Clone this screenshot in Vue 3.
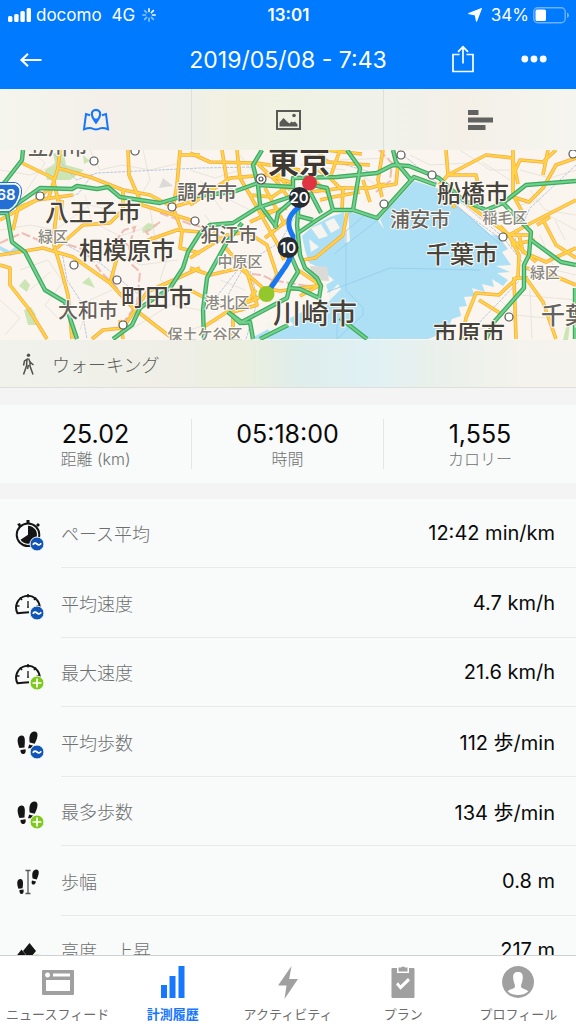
<template>
    <div class="screen">
        <header class="header">
            <div class="status-bar">
                <div class="status-left">
                    <svg class="signal" width="24" height="16" viewBox="0 0 24 16" fill="#fff">
                        <rect x="0" y="9" width="4.4" height="6" rx="1.5" />
                        <rect x="6.2" y="7" width="4.4" height="8" rx="1.5" />
                        <rect x="12.4" y="4" width="4.4" height="11" rx="1.5" />
                        <rect x="18.6" y="1" width="4.4" height="14" rx="1.5" />
                    </svg>
                    <span>docomo</span>
                    <span class="network">4G</span>
                    <svg width="16" height="16" viewBox="-8 -8 16 16" stroke="#fff" stroke-width="1.6" stroke-linecap="round">
                        <line
                            v-for="n in 8"
                            :key="n"
                            x1="0"
                            y1="-3.4"
                            x2="0"
                            y2="-6.2"
                            :transform="`rotate(${n * 45})`"
                            :opacity="n < 3 || n === 8 ? 1 : 0.55"
                        />
                    </svg>
                </div>
                <span class="clock">13:01</span>
                <div class="status-right">
                    <svg width="14" height="14" viewBox="0 0 14 14"><path d="M13.5.5 8.5 13.5 7.3 7 .5 5.6z" fill="#fff" stroke="#fff" stroke-linejoin="round" /></svg>
                    <span>34%</span>
                    <svg width="36" height="17" viewBox="0 0 36 17">
                        <rect x=".8" y=".8" width="31.4" height="15" rx="4" fill="none" stroke="#6db2ff" stroke-width="1.4" />
                        <rect x="2.5" y="2.6" width="10.5" height="11.4" rx="1.5" fill="#fff" />
                        <path d="M34 5.5q2 .5 2 2.8t-2 2.8z" fill="#6db2ff" />
                    </svg>
                </div>
            </div>
            <div class="title-bar">
                <button class="icon-button back" aria-label="戻る">
                    <svg width="24" height="16" viewBox="0 0 24 16" fill="none" stroke="#fff" stroke-width="2.2"><path d="M22.500 8H2.500M9 1.700 2.500 8l6.500 6.300" /></svg>
                </button>
                <h1>2019/05/08 - 7:43</h1>
                <div class="actions">
                    <button class="icon-button" aria-label="共有">
                        <svg width="24" height="30" viewBox="0 0 24 30" fill="none" stroke="#fff" stroke-width="1.7"><path d="M8.500 9.500H2v17h20v-17h-6.500M12 18.500V2M7 6.800l5-5 5 5" /></svg>
                    </button>
                    <button class="icon-button" aria-label="メニュー">
                        <svg width="26" height="10" viewBox="0 0 26 10" fill="#fff"><circle cx="3.800" cy="4" r="3.400" /><circle cx="13" cy="4" r="3.400" /><circle cx="22.200" cy="4" r="3.400" /></svg>
                    </button>
                </div>
            </div>
        </header>

        <div class="view-tabs">
            <button aria-label="地図">
                <svg width="28" height="24" viewBox="0 0 28 24" fill="none" stroke="#1877f9" stroke-width="2">
                    <path d="M8 7.200 4 6 2 21.200q6-2 8-.8 4 2 8 0 3-1 8 .8L24 6l-4 1.200" />
                    <path d="M14 14.500Q9.800 9 9.800 6a4.200 4.200 0 0 1 8.400 0q0 3-4.200 8.500z" stroke-width="2.200" />
                    <path d="M12 10.500h4L14 14z" fill="#1877f9" stroke="none" />
                </svg>
            </button>
            <button aria-label="写真">
                <svg width="26" height="22" viewBox="0 0 26 22" fill="#595a55">
                    <path d="M2 2h23v18H2z" fill="none" stroke="#595a55" stroke-width="2" />
                    <path d="M4.500 17.500v-4l4-4.500 4 4 2 1.500 2-2 1.500 1 2-1 2.500 3v2z" />
                    <circle cx="19" cy="6.500" r="1.800" />
                </svg>
            </button>
            <button aria-label="グラフ">
                <svg width="26" height="20" viewBox="0 0 26 20" fill="#626360"><path d="M1 0h10.500v5H1zM1 7.500h25v5H1zM1 15h17.500v5H1z" /></svg>
            </button>
        </div>

        <svg class="map" viewBox="0 150 576 190" preserveAspectRatio="xMidYMid slice">
            <rect y="150" width="576" height="190" fill="#faf5ee" />
            <path v-for="d in parks" :key="d" :d="d" fill="#cbe5b4" />
            <path d="M302 236 313 226 330 217 348 211 353 213 377 219 384 229 380 219 390 207 404 192 414 181 437 188 459 208 478 224 491 235 497 240 491 234 498 236 508 249 502 252 511 265 496 266 510 272 497 273 508 280 503 286 492 279 494 287 482 284 485 292 472 288 475 296 464 297 467 306 459 307 461 316 452 319 446 332 428 339H250L270 328 292 317 306 310 323 309 331 299 326 285 334 280 318 267 309 263 305 250z" fill="#ade0f5" />
            <path d="M0 246 10 251 18 244 22 252 10 256 0 250z" fill="#ade0f5" />
            <g fill="#f6f4ef">
                <path d="M311 228 321 224 328 236 319 239zM325 222 334 218 340 228 331 233zM309 239 319 247 311 252zM329 293 338 284 341 289 331 299zM348 208 350 242 345 243 344 212z" />
                <path d="M263 323 287 318 294 325 270 332z" />
            </g>
            <path d="M310 266 327 267 329 281 313 280zM163 178 173 186 159 188z" fill="#dcdad7" />
            <g class="streets">
                <path v-for="d in streets" :key="d" :d="d" />
            </g>
            <g class="ferries">
                <path d="M337 339 363 315V308L346 290V231L365 215M327 292 390 268 480 270M337 312V339M379 219 334 254M443 193 500 244" />
            </g>
            <g class="borders">
                <path d="M0 243 22 233 38 240 60 242 85 250 101 272 120 291M160 222 146 232 152 238 140 247 131 240 135 227 124 230 118 238 129 246 130 263 140 272 137 304 123 323M160 213 190 224 202 227M252 274 262 275 272 280 320 288M379 150 392 163 390 181 376 192" />
            </g>
            <g class="rails">
                <path d="M55 155 76 180 97 173 200 168 255 167M93 174 78 194 61 198 53 225 57 240 100 263 145 300M62 252 67 280 80 300 87 339M202 315 240 267 280 242 296 215M228 295 245 265M300 152 370 172M398 151 430 177 503 237 526 267M576 165 530 208 515 240M477 325 519 281M250 271 258 300 246 339M440 195 500 238" />
            </g>
            <g class="roads">
                <path v-for="d in roads" :key="d" :d="d" class="road-case" />
                <path v-for="d in roads" :key="d" :d="d" class="road-fill" />
            </g>
            <g class="highways">
                <path v-for="d in highways" :key="d" :d="d" class="highway-case" />
                <path v-for="d in highways" :key="d" :d="d" class="highway-fill" />
            </g>
            <circle v-for="c in stations" :key="c.join()" :cx="c[0]" :cy="c[1]" r="4" class="station" />
            <circle cx="261" cy="179" r="5" class="station" />
            <circle cx="261" cy="179" r="2" class="station" />
            <path d="M-6 184H15q6 2 5 9-2 12-11 17H-6z" fill="#236fd4" stroke="#fff" stroke-width="1.500" />
            <path d="M-6 182.500H15.500q7 2.500 6 10.500-2 13-12 19H-6" fill="none" stroke="#236fd4" />
            <text x="6" y="200" class="shield">68</text>
            <text
                v-for="label in labels"
                :key="label.x"
                :x="label.x"
                :y="label.y"
                :font-size="label.size"
                :class="['place', label.kind]"
            >{{ label.text }}</text>
            <path d="M299 207Q290 214 289 221T293 236V247Q291 260 283 270L268 292" class="route" />
            <circle cx="309.500" cy="183" r="7.500" fill="#de3540" />
            <circle cx="266.500" cy="294" r="8" fill="#92c82b" />
            <circle cx="299.500" cy="197.500" r="10.500" fill="#272c33" />
            <circle cx="288" cy="247.500" r="10.500" fill="#272c33" />
            <text x="299" y="203" class="marker">20</text>
            <text x="288" y="253" class="marker">10</text>
        </svg>

        <div class="activity">
            <svg width="14" height="24" viewBox="0 0 14 24" fill="none" stroke="#50524d" stroke-width="1.500">
                <circle cx="7.500" cy="3.200" r="1.700" fill="#50524d" stroke="none" />
                <path d="M7 6.500 3.500 9 2.500 13.500M7.500 6.500 9 10l3.500 3M6 7.500 5.500 14 2.500 22.500M9 9v5l3 8.500M7.500 13l-1 4" />
            </svg>
            <span>ウォーキング</span>
        </div>

        <div class="summary">
            <div v-for="item in summary" :key="item.label" class="summary-item">
                <strong>{{ item.value }}</strong>
                <span>{{ item.label }}</span>
            </div>
        </div>

        <ul class="details">
            <li v-for="row in rows" :key="row.label">
                <svg width="32" height="36" viewBox="0 0 32 36" fill="#151515" stroke="#151515">
                    <g v-if="row.icon === 'pace'" stroke="none">
                        <circle cx="14" cy="18.700" r="11.300" fill="none" stroke="#151515" stroke-width="2" />
                        <path d="M14 18.700V9.700A9 9 0 1 1 6.500 23.700z" />
                        <path d="M12.500 4h3v4h-3zM3.200 8 6 7l1.500 3.500-2 1.500zM22 9l2-2 2 2-2 2z" />
                    </g>
                    <g v-else-if="row.icon === 'speed'" fill="none" stroke-width="2">
                        <path d="M15 27.200Q8 27.500 3.500 28.200A11.800 11.800 0 1 1 25.700 23" />
                        <path d="M14 9v3.500M2 21h3.500M6 12.500l2 2.500M22 12.500l-2 2.500M22.500 21H26" stroke-width="1.500" />
                        <path d="M14 16v5" stroke-width="1.300" />
                        <circle cx="14" cy="22" r="1" fill="#151515" stroke="none" />
                    </g>
                    <g v-else-if="row.icon === 'steps'" stroke="none">
                        <path d="M7 11.500c-5 1-3.500 8-1.500 12.500l5-.5c.4-6 1.500-12.500-3.500-12zM6.500 26l5-.7c.8 3.500-.8 4.700-2.500 4.700S6.200 28 6.500 26zM20 7.500c-5 1-5 7-4.300 11l5 1.200c2.700-5 5-12.500-.7-12.200zM15.200 20.500l4 1.300c-1 3-2.500 2.500-5.200 2.500z" />
                    </g>
                    <g v-else-if="row.icon === 'stride'" stroke="none">
                        <path d="M6 16c-3.800.8-3 6-1.500 9.700l4-.4C9.500 20.500 9.500 15.500 6 16zM5.500 27l4-.5c.6 3-.5 4.500-2 4.500s-2.300-2-2-4zM22 6.500c-4.300.8-4 5.500-3.300 9l4 1C24.700 12.500 26.500 6.500 22 6.500zM18 17.500l4 1c-.7 3-2.200 3.300-3.300 3s-1.500-2-.7-4z" />
                        <path d="M14 7v24M11.500 7.500h5M11.500 30.500h5" fill="none" stroke="#555" stroke-width="1.300" />
                    </g>
                    <g v-else stroke="none">
                        <path d="M15.500 10 22 18l-6.500 8L9 18zM7.500 16.500 15 26H0z" />
                    </g>
                    <circle v-if="row.badge" cx="23" cy="28" r="7" :fill="row.badge === 'average' ? '#1055b5' : '#7fc81e'" stroke="#f9fbfb" />
                    <path v-if="row.badge === 'average'" d="M18.800 28.800q2-2.800 4.200-.8t4.200-.8" fill="none" stroke="#fff" stroke-width="1.700" />
                    <path v-if="row.badge === 'max'" d="M18.500 28h9M23 23.500v9" fill="none" stroke="#fff" stroke-width="1.700" />
                </svg>
                <div class="detail">
                    <span class="detail-label">{{ row.label }}</span>
                    <span class="detail-value">{{ row.value }}</span>
                </div>
            </li>
        </ul>

        <nav class="tab-bar">
            <a v-for="tab in tabs" :key="tab.name" href="#" :class="{ active: tab.name === current }" @click.prevent="current = tab.name">
                <svg width="34" height="34" viewBox="0 0 34 34" fill="currentColor">
                    <path v-if="tab.icon === 'feed'" fill-rule="evenodd" d="M2 4h30q1 0 1 1v23q0 1-1 1H2q-1 0-1-1V5q0-1 1-1zM5 14v11h24V14zM12 7.500v3h17v-3zM6.500 6.500a2.500 2.500 0 1 0 .1 0z" />
                    <path v-else-if="tab.icon === 'history'" d="M5 19h6v13H5zM13.500 10h6v22h-6zM22.500 0h6v32h-6z" />
                    <path v-else-if="tab.icon === 'activity'" d="M20.500 0 7 19.500h8.500L13.500 33 27 13h-8.800z" />
                    <template v-else-if="tab.icon === 'plan'">
                        <path fill-rule="evenodd" d="M6.500 2H11v5h12V2h4.500q1 0 1 1v28q0 1-1 1h-21q-1 0-1-1V3q0-1 1-1zM10 18.500l4.500 5.200L24 14.500l-2-2.500-7.500 7.200-2.500-3z" />
                        <path d="M12.500 1.500h2.500q2-2 4 0h2.500v4h-9z" />
                    </template>
                    <path v-else fill-rule="evenodd" d="M17 0a16 16 0 1 0 .1 0zM17 6c-4 0-5.200 2.500-4.700 7 .3 3.500 1.700 5 1.700 7.500 0 2.500-6 2.500-7.300 5Q11 29 17 29t10.300-3.500c-1.300-2.500-7.300-2.500-7.300-5s1.400-4 1.700-7.500C22.200 8.500 21 6 17 6z" />
                </svg>
                <span>{{ tab.name }}</span>
            </a>
        </nav>
    </div>
</template>

<script setup>
import { ref } from 'vue';

const current = ref('計測履歴')

const tabs = [
    {name : 'ニュースフィード', icon : 'feed'},
    {name : '計測履歴', icon : 'history'},
    {name : 'アクティビティ', icon : 'activity'},
    {name : 'プラン', icon : 'plan'},
    {name : 'プロフィール', icon : 'profile'},
]

const summary = [
    {value : '25.02', label : '距離 (km)'},
    {value : '05:18:00', label : '時間'},
    {value : '1,555', label : 'カロリー'},
]

const rows = [
    {label : 'ペース平均', value : '12:42 min/km', icon : 'pace', badge : 'average'},
    {label : '平均速度', value : '4.7 km/h', icon : 'speed', badge : 'average'},
    {label : '最大速度', value : '21.6 km/h', icon : 'speed', badge : 'max'},
    {label : '平均歩数', value : '112 歩/min', icon : 'steps', badge : 'average'},
    {label : '最多歩数', value : '134 歩/min', icon : 'steps', badge : 'max'},
    {label : '歩幅', value : '0.8 m', icon : 'stride'},
    {label : '高度　上昇', value : '217 m', icon : 'altitude', badge : 'max'},
]

// 地図
const labels = [
    {text : '立川市', x : 58, y : 155, size : 20, kind : 'town'},
    {text : '八王子市', x : 93, y : 221, size : 24, kind : 'city'},
    {text : '緑区', x : 53, y : 242, size : 15, kind : 'ward'},
    {text : '相模原市', x : 127, y : 259, size : 24, kind : 'city'},
    {text : '町田市', x : 157, y : 306, size : 24, kind : 'city'},
    {text : '大和市', x : 88, y : 318, size : 20, kind : 'town'},
    {text : '調布市', x : 207, y : 200, size : 20, kind : 'town'},
    {text : '狛江市', x : 229, y : 242, size : 19, kind : 'town'},
    {text : '中原区', x : 240, y : 267, size : 15, kind : 'ward'},
    {text : '港北区', x : 227, y : 308, size : 15, kind : 'ward'},
    {text : '保土ケ谷区', x : 205, y : 340, size : 15, kind : 'ward'},
    {text : '東京', x : 299, y : 173, size : 31, kind : 'capital'},
    {text : '川崎市', x : 315, y : 324, size : 28, kind : 'city'},
    {text : '船橋市', x : 473, y : 202, size : 24, kind : 'city'},
    {text : '浦安市', x : 420, y : 227, size : 20, kind : 'town'},
    {text : '稲毛区', x : 505, y : 223, size : 15, kind : 'ward'},
    {text : '千葉市', x : 462, y : 263, size : 24, kind : 'city'},
    {text : '緑区', x : 545, y : 278, size : 15, kind : 'ward'},
    {text : '千葉', x : 565, y : 324, size : 24, kind : 'town'},
    {text : '市原市', x : 469, y : 342, size : 24, kind : 'city'},
]

const stations = [
    [94, 161], [40, 196], [172, 207], [74, 265], [117, 280], [123, 325], [195, 221],
    [135, 151], [384, 204], [401, 155], [432, 175], [503, 237], [509, 317], [573, 154],
]

const parks = [
    'M45 170 55 163 53 153 64 154 66 165 84 170 70 180 47 180z',
    'M142 228 148 223 158 225 150 231 143 233z',
    'M82 283 89 277 95 288z',
    'M19 286 25 279 30 285 27 292z',
    'M24 310 31 307 36 315 34 322 39 325 28 325z',
    'M290 156 296 157 293 162zM228 189 233 187 232 193z',
    'M566 327 570 325 568 340 563 340z',
    'M83 155 90 161 84 164z',
]

const highways = [
    'M23 150 22 160 5 182 0 187',
    'M0 213H7L12 242 25 252 45 290 65 302 68 312 77 339',
    'M7 211 40 188 72 189 77 186 97 189 108 187 120 197 160 203 177 198 233 192 258 183',
    'M113 339 132 325 140 308 170 288 183 268 188 252 200 233 210 225 233 223 257 208 290 197',
    'M262 150 253 165 258 185 260 205 277 228',
    'M258 185 293 187V178L337 177 377 173 393 165 409 166 439 178 463 200 486 210 503 203 526 185 576 181',
    'M393 150 396 162 411 180',
    'M298 233 317 220 333 210H353L377 218 414 177 436 185',
    'M347 150 360 168 353 210',
    'M313 185 327 188 333 210',
    'M299 200 297 225 300 255 305 268 317 278 321 286 319 298 300 289 289 288',
    'M293 200 278 213 275 228M310 192 321 213M298 216 313 220',
    'M290 240 292 258 298 272 290 285 287 298 240 323 228 312',
    'M242 223 227 242 207 278 203 310 204 339',
    'M228 312 243 323 250 322 253 339M260 339 288 325M340 318 367 339',
    'M503 203 531 232 529 255 524 265V288L494 322 486 339',
    'M531 240 561 262 576 265M575 288V339',
]

const roads = [
    'M22 163 53 178 58 200 53 242 60 265 68 295 72 339',
    'M60 150 58 168 90 177 123 190 150 195 173 207 197 200',
    'M58 168 48 200M0 220 37 200 73 195M13 230 18 208 37 200',
    'M0 255 43 248 73 257 110 283 133 308 173 339',
    'M57 248 83 225 110 223 123 210V190',
    'M128 150 129 175 142 205 197 222M62 200 61 220M36 200 50 188',
    'M180 150 177 185 173 207 182 232 180 248 200 253M180 155H200',
    'M143 242 177 230 200 232M110 283 117 258M120 320 123 339',
    'M0 265 10 268V285L28 308 47 339',
    'M92 339 103 330 123 328 147 292 200 268',
    'M222 150 227 182 210 190M190 153 210 162 257 163 300 170',
    'M237 150 240 178 250 195 278 245 284 260',
    'M273 150 278 175 290 190M190 205 230 178 267 175 293 183',
    'M190 258 227 235 247 232 267 245 277 275 267 292',
    'M190 268 210 275 240 268 263 288 280 291 323 285',
    'M223 245 247 272 257 305 233 312V339M190 290 220 306',
    'M202 328 230 310 262 296M213 232 227 245M256 290 240 311',
    'M257 163 278 183 288 197M262 213 287 208M265 188 285 225',
    'M250 195 272 197 293 183M265 238 290 218M250 222 278 209',
    'M340 150 330 178 340 188 370 188 385 184',
    'M317 150 327 162 370 165M330 178 318 170M325 150 362 154',
    'M310 192 343 188 342 210M312 178 330 195M320 200 333 197 360 192',
    'M303 260 315 258 343 235 347 213M295 268 320 285 300 296',
    'M383 150 378 180 382 197M363 180 370 202M378 187 396 184 398 165',
    'M446 150 448 175 476 175 479 188M448 175 440 184 455 208',
    'M448 175 486 155 513 158V195L524 215M513 150V158',
    'M513 175 520 160 543 162 556 150M513 160 518 184',
    'M513 197 529 202 543 188 556 165 576 158M548 150 543 175',
    'M576 200 533 222 509 235 486 218 466 203',
    'M509 235 519 255 518 277 499 295 476 293 466 318 462 339',
    'M519 235 523 252 546 262 576 248M509 235 532 235M511 245 535 240',
    'M543 220 556 245 576 258M537 225 550 217',
    'M526 268 547 273 576 285M526 278 543 302 556 339',
    'M514 277 516 339M479 300 503 315M515 278 528 278',
    'M500 226 520 248 536 262',
]

const streets = [
    'M0 170 30 175 55 165M30 150 45 163 20 200M90 150 100 170 122 165 150 170 180 163',
    'M0 230 30 225 55 230 90 205 130 215M20 270 48 260 63 282 45 305 60 320',
    'M85 195 92 222 120 236 145 228M80 260 105 245 140 265 178 260',
    'M0 300 20 318 5 335M30 290 50 272M80 330 90 300 112 290M143 150 150 180 138 200',
    'M150 208 155 240 170 250 160 280 185 295M130 330 170 305 200 310',
    'M190 170 215 178 240 170M200 180 222 210M205 215 230 250M220 280 245 290M190 330 220 320',
    'M240 155 255 175M230 200 250 210M275 160 300 150M300 165 345 170M340 160 390 158',
    'M360 175 385 190M410 155 430 165 470 163M460 150 490 170 510 170',
    'M520 170 550 178 576 170M530 190 545 210 576 215M555 220 565 240M540 235 555 270 576 275',
    'M500 300 515 315 545 318M530 290 532 339M475 330 500 325',
    'M482 162 510 180M540 200 520 205M548 215 576 230M520 295 576 300',
]
</script>

<style>
body {
    margin: 0;
}
</style>

<style scoped>
.screen {
    display: flex;
    flex-direction: column;
    height: 100vh;
    overflow: hidden;
    background: #f4f4f4;
    color: #0a0a0a;
    font-family: Inter, "Noto Sans CJK JP", sans-serif;
}

button {
    padding: 0;
    border: none;
    background: transparent;
    cursor: pointer;
}

svg {
    display: block;
    flex-shrink: 0;
}

.header {
    flex-shrink: 0;
    background: #007aff;
    color: #fff;
}

.status-bar {
    display: grid;
    grid-template-columns: 1fr auto 1fr;
    align-items: center;
    height: 30px;
    padding: 0 7px 0 8px;
    font-size: 17px;
}

.status-left,
.status-right {
    display: flex;
    align-items: center;
    gap: 4px;
}

.status-right {
    justify-content: flex-end;
}

.status-right span {
    margin-left: 5px;
}

.network {
    margin: 0 2px 0 6px;
}

.clock {
    font-weight: 600;
}

.title-bar {
    display: grid;
    grid-template-columns: 1fr auto 1fr;
    align-items: center;
    height: 59px;
    padding: 0 19px;
}

.title-bar h1 {
    margin: 0;
    font-size: 23px;
    font-weight: 400;
    line-height: 28px;
}

.icon-button {
    display: flex;
}

.actions {
    display: flex;
    align-items: center;
    justify-content: flex-end;
    gap: 46px;
    padding-right: 10px;
}

.view-tabs {
    display: grid;
    grid-template-columns: repeat(3, 1fr);
    flex-shrink: 0;
    height: 61px;
    background: linear-gradient(90deg, #f4f5ed, #f4f0e9 18%, #f1f0e9 32%, #f2f1e1 40%, #eff2e3 52%, #f0f2ea 65%, #f4f0e8 80%, #f5f5ef);
}

.view-tabs button {
    display: flex;
    align-items: center;
    justify-content: center;
    border-right: 1px solid #e0e0da;
}

.view-tabs button:last-child {
    border-right: none;
}

.map {
    width: 100%;
    height: 190px;
}

.streets path {
    fill: none;
    stroke: #e9e4dc;
}

.ferries path {
    fill: none;
    stroke: #98d0ee;
}

.borders path {
    fill: none;
    stroke: #eebdb3;
    stroke-width: 2;
    stroke-dasharray: 9 3;
}

.rails path {
    fill: none;
    stroke: #b9c8df;
    stroke-dasharray: 3 1;
}

.roads path,
.highways path {
    fill: none;
    stroke-linejoin: round;
}

.road-case {
    stroke: #f5a94f;
    stroke-width: 3.6;
}

.road-fill {
    stroke: #ffd440;
    stroke-width: 2.2;
}

.highway-case {
    stroke: #3cab60;
    stroke-width: 4.4;
}

.highway-fill {
    stroke: #74d18d;
    stroke-width: 2;
}

.station {
    fill: #fff;
    stroke: #555;
    stroke-width: 1.2;
}

.shield,
.marker {
    fill: #fff;
    font-size: 15px;
    font-weight: 600;
    text-anchor: middle;
}

.place {
    font-family: "Noto Sans CJK JP", sans-serif;
    font-weight: 500;
    text-anchor: middle;
    paint-order: stroke;
    stroke: #fffcf6;
    stroke-width: 2px;
    stroke-linejoin: round;
}

.capital {
    fill: #3d3832;
    font-weight: 700;
}

.city {
    fill: #46423c;
}

.town {
    fill: #65625e;
}

.ward {
    fill: #898782;
}

.route {
    fill: none;
    stroke: #1877f5;
    stroke-width: 5;
    stroke-linecap: round;
}

.activity {
    display: flex;
    align-items: center;
    flex-shrink: 0;
    gap: 17px;
    box-sizing: border-box;
    height: 48px;
    padding-left: 21px;
    border-bottom: 1px solid #dedfd8;
    background: linear-gradient(90deg, #f1f2ec, #efefe7 30%, #ecefdf 42%, #dfedeb 52%, #e0f1f4 64%, #eaf0eb 76%, #f5f3ed 92%);
    color: #5c5e58;
    font-size: 18px;
    font-weight: 300;
}

.summary {
    display: grid;
    grid-template-columns: repeat(3, 1fr);
    flex-shrink: 0;
    box-sizing: border-box;
    height: 78px;
    margin: 17px 0 16px;
    padding: 14px 0;
    background: #f9fbfb;
}

.summary-item {
    display: flex;
    flex-direction: column;
    align-items: center;
    border-right: 1px solid #e4e6e6;
}

.summary-item:last-child {
    border-right: none;
}

.summary-item strong {
    font-size: 25px;
    font-weight: 400;
    line-height: 30px;
}

.summary-item span {
    color: #6e7070;
    font-size: 16px;
    font-weight: 300;
    line-height: 20px;
}

.details {
    flex: 1;
    min-height: 0;
    margin: 0;
    padding: 0;
    overflow: hidden;
    background: #f9fbfb;
    list-style: none;
}

.details li {
    display: flex;
    align-items: center;
    gap: 15px;
    height: 69px;
    padding-left: 14px;
}

.details li:nth-child(even) {
    height: 70px;
}

.detail {
    display: flex;
    align-items: center;
    justify-content: space-between;
    flex: 1;
    box-sizing: border-box;
    height: 100%;
    padding-right: 21px;
    border-bottom: 1px solid #e8eaea;
}

.detail-label {
    color: #6e7070;
    font-size: 18px;
    font-weight: 300;
}

.detail-value {
    font-size: 20px;
}

.tab-bar {
    display: grid;
    grid-template-columns: repeat(5, 1fr);
    flex-shrink: 0;
    box-sizing: border-box;
    height: 69px;
    padding-top: 10px;
    border-top: 1px solid #cfd2d2;
    background: #fff;
}

.tab-bar a {
    display: flex;
    flex-direction: column;
    align-items: center;
    gap: 4px;
    color: #a0a0a0;
    text-decoration: none;
}

.tab-bar span {
    color: #6c6c6c;
    font-size: 13px;
    line-height: 20px;
    white-space: nowrap;
}

.tab-bar .active,
.tab-bar .active span {
    color: #1777ff;
}

.tab-bar .active span {
    font-weight: 700;
}
</style>
